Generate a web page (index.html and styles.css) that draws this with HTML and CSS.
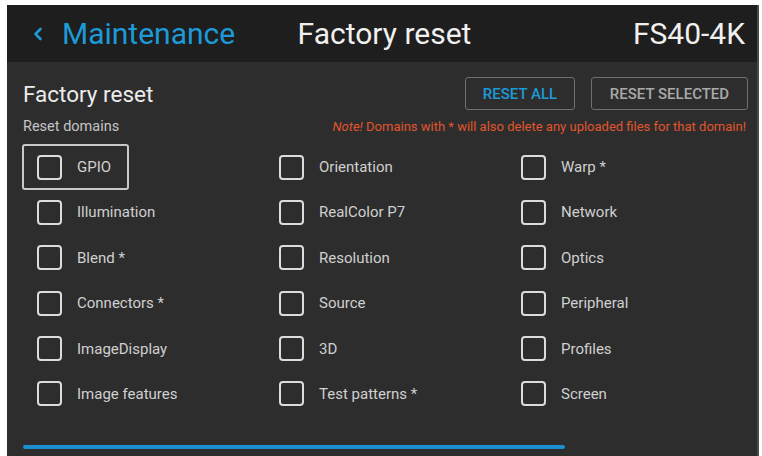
FILE: index.html
```html
<!DOCTYPE html>
<html lang="en">
<head>
    <meta charset="UTF-8">
    <title>Factory reset</title>
    <link rel="stylesheet" href="styles.css">
</head>
<body>
    <div class="screen">
        <!-- Top bar -->
        <div class="topbar">
            <div class="back">
                <svg class="chevron" width="10" height="14" viewBox="0 0 10 14">
                    <polyline points="7.5,2 2.5,7 7.5,12" fill="none" stroke="#1d9ad8" stroke-width="2.6" stroke-linecap="round" stroke-linejoin="round"/>
                </svg>
                <span>Maintenance</span>
            </div>
            <div class="title">Factory reset</div>
            <div class="device">FS40-4K</div>
        </div>

        <!-- Content -->
        <div class="content">
            <div class="head-row">
                <h1>Factory reset</h1>
                <div class="actions">
                    <button class="btn btn-primary">RESET ALL</button>
                    <button class="btn btn-wide">RESET SELECTED</button>
                </div>
            </div>
            <div class="sub-row">
                <span class="sub-label">Reset domains</span>
                <span class="note"><em>Note!</em> Domains with * will also delete any uploaded files for that domain!</span>
            </div>

            <div class="domains">
                <label class="domain focused"><span class="box"></span>GPIO</label>
                <label class="domain"><span class="box"></span>Orientation</label>
                <label class="domain"><span class="box"></span>Warp *</label>
                <label class="domain"><span class="box"></span>Illumination</label>
                <label class="domain"><span class="box"></span>RealColor P7</label>
                <label class="domain"><span class="box"></span>Network</label>
                <label class="domain"><span class="box"></span>Blend *</label>
                <label class="domain"><span class="box"></span>Resolution</label>
                <label class="domain"><span class="box"></span>Optics</label>
                <label class="domain"><span class="box"></span>Connectors *</label>
                <label class="domain"><span class="box"></span>Source</label>
                <label class="domain"><span class="box"></span>Peripheral</label>
                <label class="domain"><span class="box"></span>ImageDisplay</label>
                <label class="domain"><span class="box"></span>3D</label>
                <label class="domain"><span class="box"></span>Profiles</label>
                <label class="domain"><span class="box"></span>Image features</label>
                <label class="domain"><span class="box"></span>Test patterns *</label>
                <label class="domain"><span class="box"></span>Screen</label>
            </div>

            <div class="progress"></div>
        </div>
    </div>
</body>
</html>
```

FILE: styles.css
```css
/* Page */
body {
    margin: 0;
    background: #ffffff;
    font-family: Roboto, "Liberation Sans", sans-serif;
}

/* Projector screen */
.screen {
    margin: 5px 0 0 7px;
    width: 750px;
    height: 451px;
    background: #2d2d2d;
    border-right: 2px solid #4a4a4a;
    overflow: hidden;
}

/* Top bar */
.topbar {
    display: grid;
    grid-template-columns: 1fr auto 1fr;
    align-items: center;
    height: 57px;
    padding: 0 12px 0 26px;
    background: #1e1e1e;
    font-size: 30px;
}

.back {
    display: flex;
    align-items: center;
    gap: 19px;
    color: #1d9ad8;
}

.title {
    margin-right: 9px;
    color: #f0f0f0;
}

.device {
    color: #f0f0f0;
    text-align: right;
}

/* Content */
.content {
    padding: 15px 9px 0 15px;
}

.head-row {
    display: flex;
    justify-content: space-between;
    align-items: center;
    padding-left: 1px;
}

h1 {
    margin: 0;
    font-size: 22.5px;
    font-weight: 400;
    color: #ececec;
}

.actions {
    display: flex;
    gap: 16px;
}

.btn {
    width: 110px;
    height: 33px;
    padding: 0;
    background: transparent;
    border: 1px solid #6f6f6f;
    border-radius: 3px;
    font-family: inherit;
    font-size: 15px;
    font-weight: 500;
    color: #a9a9a9;
}

.btn-wide {
    width: 157px;
}

.btn-primary {
    color: #1d9ad8;
}

.sub-row {
    display: flex;
    justify-content: space-between;
    align-items: center;
    height: 22px;
    margin-top: 5px;
    padding: 0 2px 0 1px;
}

.sub-label {
    font-size: 14.5px;
    color: #c4c4c4;
}

.note {
    font-size: 13px;
    color: #e0552e;
}

/* Domain checkboxes */
.domains {
    display: grid;
    grid-template-columns: repeat(3, 242px);
    grid-auto-rows: 45.4px;
    margin-top: 7px;
}

.domain {
    display: inline-flex;
    align-items: center;
    justify-self: start;
    gap: 15px;
    height: 46px;
    box-sizing: border-box;
    padding: 0 16px 0 13px;
    border: 2px solid transparent;
    border-radius: 3px;
    font-size: 15px;
    color: #d0d0d0;
}

.domain.focused {
    border-color: #c8c8c8;
}

.box {
    width: 25px;
    height: 25px;
    box-sizing: border-box;
    border: 2px solid #dcdcdc;
    border-radius: 4px;
}

/* Bottom progress */
.progress {
    width: 542px;
    height: 4px;
    margin: 29px 0 0 1px;
    background: #1b8fd0;
    border-radius: 2px;
}
```
